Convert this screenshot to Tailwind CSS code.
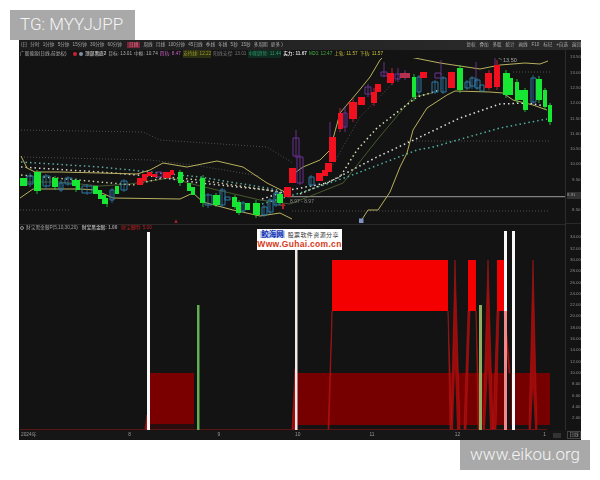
<!DOCTYPE html>
<html lang="zh">
<head>
<meta charset="utf-8">
<script src="https://cdn.jsdelivr.net/npm/@tailwindcss/browser@4"></script>
</head>
<body class="bg-white">
<div class="w-[600px] h-[480px] overflow-hidden pt-[10px] font-['Liberation_Sans','Noto_Sans_CJK_SC',sans-serif]">
  <div class="ml-[10px] w-[125px] h-[30px] bg-[#a9a9a9] text-[#f4f4f4] font-['Roboto',sans-serif] font-light text-[17px] flex items-center pl-[10px]">TG: MYYJJPP</div>

  <div class="ml-[19px] w-[562px] h-[400px] bg-[#131313] flex flex-col overflow-hidden">
    <!-- toolbar -->
    <div class="h-[10px] shrink-0 bg-gradient-to-r from-[#1c1c1c] to-[#2c2c2c] flex items-center justify-between text-[4.6px] text-[#a8a8a8] whitespace-nowrap blur-[0.25px]">
      <div class="flex items-center gap-[3.2px] pl-[2px]">
        <span>(日</span><span>分时</span><span>1分钟</span><span>5分钟</span><span>15分钟</span><span>30分钟</span><span>60分钟</span>
        <span class="bg-[#7a2338] text-[#d07a8a] px-[2px] ml-[2px]">日线</span>
        <span>周线</span><span>月线</span><span>100分钟</span><span>45日线</span><span>季线</span><span>年线</span><span>5秒</span><span>15秒</span><span>多周期</span><span>更多 )</span>
      </div>
      <div class="flex items-center gap-[3.8px]">
        <span>复权</span><span>叠加</span><span>多股</span><span>统计</span><span>画线</span><span>F10</span><span>标记</span><span>+自选</span><span>返回</span>
      </div>
    </div>

    <div class="flex flex-1 min-h-0">
      <!-- panes -->
      <div class="w-[546px] shrink-0 flex flex-col">
        <div class="h-[8px] shrink-0 flex items-center gap-[2px] pl-[1px] text-[4.7px] text-[#b0b0b0] whitespace-nowrap blur-[0.2px]">
          <span class="w-[49px]">广联能源(日线,前复权)</span>
          <span class="w-[4px] h-[4px] rounded-full bg-[#d02030] ml-[2px]"></span>
          <span class="w-[4px] h-[4px] rounded-full bg-[#8090a0]"></span>
          <span class="font-bold">顶部黑底2</span>
          <span>目标: 13.01</span><span>中枢: 10.74</span><span class="text-[#c060c0]">四轨: 8.47</span>
          <span class="bg-[#2c3010] text-[#9a9a30]">支持线: 12.22</span><span class="text-[#777]">阳线支撑: 13.01</span>
          <span class="bg-[#0f2a20] text-[#2f9a6a]">中期趋势: 11.44</span>
          <span class="font-bold text-[#ddd]">实力: 11.67</span><span class="text-[#45b045]">M20: 12.47</span><span class="text-[#c8c040]">上轨: 11.57</span><span class="text-[#c8c040]">下轨: 11.57</span>
        </div>

        <svg class="w-[546px] h-[166px] shrink-0 blur-[0.35px]" viewBox="19 58 546 166" fill="none">
          <!-- faint dotted -->
          <g stroke="#6a6a6a" stroke-width="0.7" stroke-dasharray="1 2">
            <polyline points="21,130 143,132 160,140 267,147 293,163"/>
            <polyline points="21,157 150,160 200,166 260,176"/>
            <polyline points="330,170 360,117 393,83 405,72"/>
            <polyline points="407,141 550,141"/>
            <polyline points="513,72 550,72"/>
            <polyline points="292,211 550,211"/>
            <polyline points="20,210 70,210"/>
          </g>
          <line x1="287" y1="196.7" x2="565" y2="196.7" stroke="#9c9c9c" stroke-width="1"/>
          <!-- thin olive -->
          <polyline points="21,182 60,182 100,186 130,184 170,178 200,186 260,200 290,204 313,195 343,183 377,140 413,97 433,93" stroke="#5f7a3a" stroke-width="0.7"/>
          <!-- dotted MA lines -->
          <g stroke-width="1.5" stroke-dasharray="1.5 3">
            <polyline stroke="#5fa8a0" points="21,162 100,167 150,172 200,177 267,188 292,193"/>
            <polyline stroke="#d5d5d0" points="21,167 100,172 150,176 200,183 267,190 290,194"/>
            <polyline stroke="#c8c8a0" points="21,175 100,182 133,185 167,177 200,180 233,185 267,190 285,194"/>
            <polyline stroke="#e0e0e0" points="262,199 290,190 327,183 377,157 420,137 460,118 500,104 527,103 545,106"/>
            <polyline stroke="#4fb0a0" points="262,204 300,193 347,177 373,167 417,150 433,147 500,128 547,119"/>
            <polyline stroke="#d8e0b0" points="300,194 340,177 357,150 377,128 400,110 417,97 440,90"/>
          </g>
          <!-- yellow bands -->
          <g stroke="#b9b05e" stroke-width="1">
            <polyline points="21,156 27,168 35,172 60,172 100,173 137,174 150,170 163,163 187,167 217,161 243,167 267,183 287,193"/>
            <polyline points="20,198 33,189 80,189 95,190 113,198 180,199 193,193 203,202 233,210 260,216 280,213 292,219"/>
            <polyline points="296,172 303,167 320,160 330,150 340,113 357,93 370,77 380,60 383,57"/>
            <polyline points="410,57 425,60 440,63 460,66 480,69 500,65 525,63 540,64 548,61"/>
            <polyline points="361,221 368,210 378,210 390,192 400,167 407,153 413,130 427,108 447,95 455,91 490,92 503,93 513,100 533,105 547,110"/>
          </g>
          <!-- wicks -->
          <path stroke="#22e03a" stroke-width="0.8" d="M37 170v24M55 176v14M76 178v14M107 198v9M180 170v16M203 175v32M216 193v14M235 195v14M239 200v15M256 200v18M280 192v14M414 74v27M460 65v28M506 70v28M517 79v24M525 88v24M539 76v27M545 88v22M550 103v22"/>
          <path stroke="#2f7aa6" stroke-width="0.8" d="M30 173v14M46 174v16M61 180v12M68 176v10M87 184v11M112 188v15M124 179v13M208 193v15M222 188v20M243 201v12M264 205v12M270 198v16M276 191v16M311 175v12M419 75v20M435 80v14M443 76v18M467 80v10M472 76v13M477 78v12M533 75v30"/>
          <path stroke="#7b3aa0" stroke-width="0.8" d="M296 130v28M300 155v30M345 106v26M368 84v13M384 62v15M398 68v14M405 70v10M441 60v15M476 62v20M495 55v12M330 122v22"/>
          <path stroke="#d03040" stroke-width="0.8" d="M340 108v24M353 98v24M374 88v18M392 68v17M497 60v30M489 70v20"/>
          <!-- hollow candles -->
          <path stroke="#2f7aa6" stroke-width="1" d="M27 176h6v8h-6zM43 176h7v10h-7zM59 183h4v7h-4zM65 178h7v6h-7zM82 186h10v7h-10zM110 190h4v10h-4zM121 181h6v9h-6zM205 195h7v10h-7zM220 190h5v15h-5zM225 197h5v3h-5zM241 203h4v8h-4zM262 207h5v8h-5zM268 200h5v12h-5zM274 193h5v12h-5zM309 177h5v8h-5zM417 77h4v15h-4zM432 82h6v10h-6zM441 78h5v14h-5zM465 82h5v6h-5zM470 78h5v8h-5zM475 80h5v8h-5zM480 85h4v6h-4zM531 78h5v24h-5z"/>
          <path stroke="#6a3296" stroke-width="1" d="M293 138h6v18h-6zM297 157h6v26h-6zM343 113h4v14h-4zM365 87h6v7h-6zM381 72h6v4h-6zM157 172h5v5h-5zM395 74h5v5h-5zM435 73h6v5h-6z"/>
          <!-- green candles -->
          <path fill="#17e632" d="M20 178h7v8h-7zM34 172h7v19h-7zM52 178h6v9h-6zM72 180h8v6h-8zM76 184h4v6h-4zM93 186h5v8h-5zM98 190h4v9h-4zM102 195h4v9h-4zM106 198h2v6h-2zM115 186h4v8h-4zM178 172h5v11h-5zM187 183h4v8h-4zM191 187h4v8h-4zM200 178h5v25h-5zM213 195h7v10h-7zM232 197h5v10h-5zM236 202h5v11h-5zM245 203h5v7h-5zM253 203h7v12h-7zM257 210h3v5h-3zM277 194h6v9h-6zM412 77h4v20h-4zM457 68h6v22h-6zM503 73h7v22h-7zM508 78h5v17h-5zM515 82h4v18h-4zM519 90h4v10h-4zM523 90h5v20h-5zM536 79h6v21h-6zM543 90h4v17h-4zM548 105h4v17h-4z"/>
          <!-- red candles -->
          <path fill="#f01020" d="M137 178h6v7h-6zM142 174h5v7h-5zM147 172h5v4h-5zM152 174h5v3h-5zM163 172h8v6h-8zM170 170h4v5h-4zM284 187h7v10h-7zM289 168h7v15h-7zM316 173h7v8h-7zM322 170h6v6h-6zM325 163h7v9h-7zM329 137h7v25h-7zM338 113h5v16h-5zM349 102h8v17h-8zM358 97h7v8h-7zM371 92h6v11h-6zM375 84h6v8h-6zM387 73h7v10h-7zM420 72h7v6h-7zM448 72h7v16h-7zM485 73h7v15h-7zM494 65h6v22h-6z"/>
          <path fill="#b83050" d="M400 73h10v5h-10z"/>
          <!-- marks -->
          <path fill="#b02030" d="M176 219l1.5 4h-3zM283 203l3 3h-2v3h-2v-3h-2z"/>
          <text x="290" y="203" font-size="5" fill="#8a8a8a">8.97 - 8.97</text>
          <text x="503" y="62" font-size="5.5" fill="#a8a8a8">13.50</text>
          <path stroke="#9a9a9a" stroke-width="0.6" d="M497 57l5 3"/>
          <rect x="359" y="218.500" width="4.500" height="4.500" fill="#8090c0"/>
        </svg>

        <div class="relative flex-1 min-h-0 border-t border-[#2a2a2a] flex flex-col">
          <div class="h-[6px] shrink-0 flex items-center gap-[2px] pl-[1px] text-[4.7px] text-[#a0a0a0] whitespace-nowrap blur-[0.2px]">
            <span class="w-[4px] h-[4px] rounded-full border border-[#909090]"></span>
            <span>财宝黑金眼P(5,10,30,20)</span>
            <span class="font-bold ml-[2px]">财宝黑金眼: 1.00</span>
            <span class="text-[#c02020] ml-[2px]">财宝眼明: 5.00</span>
          </div>
          <svg class="w-[546px] h-[199px] shrink-0 blur-[0.3px]" viewBox="19 231 546 199" fill="none">
            <rect x="150" y="373" width="44" height="51" fill="#7a0000"/>
            <rect x="150" y="424" width="44" height="6" fill="#2a0d0d"/>
            <rect x="297" y="373" width="208" height="52" fill="#760000"/>
            <rect x="511" y="373" width="39" height="52" fill="#760000"/>
            <line x1="20" y1="429.500" x2="547" y2="429.500" stroke="#5a1414" stroke-width="1"/>
            <path fill="#f50000" d="M332 260h116v51h-116zM468 260h8v51h-8zM497 260h8v51h-8z"/>
            <path fill="#9c0a0a" stroke="#c01818" stroke-width="0.5" d="M145 429l2-14v14zM292 429l3-60v60zM328 429l4-118v10l-3 108zM448 311l4 118h-2zM455 260l-4 169h9zM464 429l4-118l2 0l-4 118zM476 311l4 118h-2zM488 260l-5 169h10zM493 429l4-118l2 0l-3 118zM533 260l-4 169h8zM505 311l5 62l-1 0l-5-62z"/>
            <path fill="#131313" d="M453 429l2-60l2 60zM485 429l3-60l2 60zM531 429l2-40l2 40z"/>
            <rect x="504" y="311" width="3" height="119" fill="#f08a8a"/>
            <rect x="147" y="232" width="3" height="198" fill="#f8f8f8"/>
            <rect x="295" y="240" width="2.500" height="190" fill="#f4e8e8"/>
            <rect x="504" y="231" width="3" height="80" fill="#f8f8f8"/>
            <rect x="512" y="231" width="3" height="199" fill="#f8f8f8"/>
            <rect x="197" y="305" width="2.500" height="125" fill="#62b050"/>
            <rect x="479" y="305" width="3" height="125" fill="#8fb060"/>
          </svg>
          <div class="absolute left-[238px] top-[4px] w-[85px] h-[21px] bg-white flex flex-col items-center justify-center leading-none">
            <div class="flex items-center gap-[3px] h-[10px]">
              <span class="text-[7.5px] font-bold bg-[#b8d0f0] text-[#1a30b0] px-[1px]">鲛海网</span>
              <span class="text-[6px] text-[#333] font-['Noto_Sans_CJK_SC',serif] tracking-[0.4px]">股票软件资源分享</span>
            </div>
            <div class="text-[8.5px] font-bold text-[#d83a20] tracking-[0.3px] h-[10px]">Www.Guhai.com.cn</div>
          </div>
        </div>
      </div>

      <!-- right axis -->
      <div class="w-[16px] shrink-0 border-l border-[#2c2c2c] flex flex-col text-[4.4px] text-[#8c8c8c] overflow-hidden whitespace-nowrap blur-[0.2px]">
        <div class="h-[173px] shrink-0 flex flex-col">
          <div class="h-[15.300px] flex items-center pl-[4px]">13.50</div>
          <div class="h-[15.300px] flex items-center pl-[4px]">13.00</div>
          <div class="h-[15.300px] flex items-center pl-[4px]">12.50</div>
          <div class="h-[15.300px] flex items-center pl-[4px]">12.00</div>
          <div class="h-[15.300px] flex items-center pl-[4px]">11.50</div>
          <div class="h-[15.300px] flex items-center pl-[4px]">11.00</div>
          <div class="h-[15.300px] flex items-center pl-[4px]">10.50</div>
          <div class="h-[15.300px] flex items-center pl-[4px]">10.00</div>
          <div class="h-[15.300px] flex items-center pl-[6px]">9.50</div>
          <div class="h-[15.300px] flex items-center pl-[1px]"><span class="bg-[#333] w-full text-[#999]">8.91</span></div>
          <div class="h-[15.300px] flex items-center pl-[6px]">8.50</div>
        </div>
        <div class="border-t border-[#2a2a2a] pt-[8px] flex flex-col">
          <div class="h-[11.300px] flex items-center pl-[4px]">34.00</div>
          <div class="h-[11.300px] flex items-center pl-[4px]">32.00</div>
          <div class="h-[11.300px] flex items-center pl-[4px]">30.00</div>
          <div class="h-[11.300px] flex items-center pl-[4px]">28.00</div>
          <div class="h-[11.300px] flex items-center pl-[4px]">26.00</div>
          <div class="h-[11.300px] flex items-center pl-[4px]">24.00</div>
          <div class="h-[11.300px] flex items-center pl-[4px]">22.00</div>
          <div class="h-[11.300px] flex items-center pl-[4px]">20.00</div>
          <div class="h-[11.300px] flex items-center pl-[4px]">18.00</div>
          <div class="h-[11.300px] flex items-center pl-[4px]">16.00</div>
          <div class="h-[11.300px] flex items-center pl-[4px]">14.00</div>
          <div class="h-[11.300px] flex items-center pl-[4px]">12.00</div>
          <div class="h-[11.300px] flex items-center pl-[4px]">10.00</div>
          <div class="h-[11.300px] flex items-center pl-[6px]">8.00</div>
          <div class="h-[11.300px] flex items-center pl-[6px]">6.00</div>
          <div class="h-[11.300px] flex items-center pl-[6px]">4.00</div>
          <div class="h-[11.300px] flex items-center pl-[6px]">2.00</div>
        </div>
      </div>
    </div>

    <!-- date axis -->
    <div class="h-[10px] shrink-0 flex items-center text-[4.8px] text-[#9a9a9a] whitespace-nowrap bg-[#161616] blur-[0.2px]">
      <span class="w-[110px] pl-[2px]">2024年</span>
      <span class="w-[90px]">8</span>
      <span class="w-[78px]">9</span>
      <span class="w-[75px]">10</span>
      <span class="w-[86px]">11</span>
      <span class="w-[89px]">12</span>
      <span class="w-[10px]">1</span>
      <span class="w-[8px] h-[5px] bg-[#333]"></span>
      <span class="ml-[6px] w-[14px] border border-[#444] text-center leading-[6px]">日线</span>
    </div>
  </div>

  <div class="ml-[460px] w-[130px] h-[30px] bg-[#a9a9a9] text-[#f4f4f4] font-['Roboto',sans-serif] font-light text-[17px] flex items-center justify-center">www.eikou.org</div>
</div>
</body>
</html>
